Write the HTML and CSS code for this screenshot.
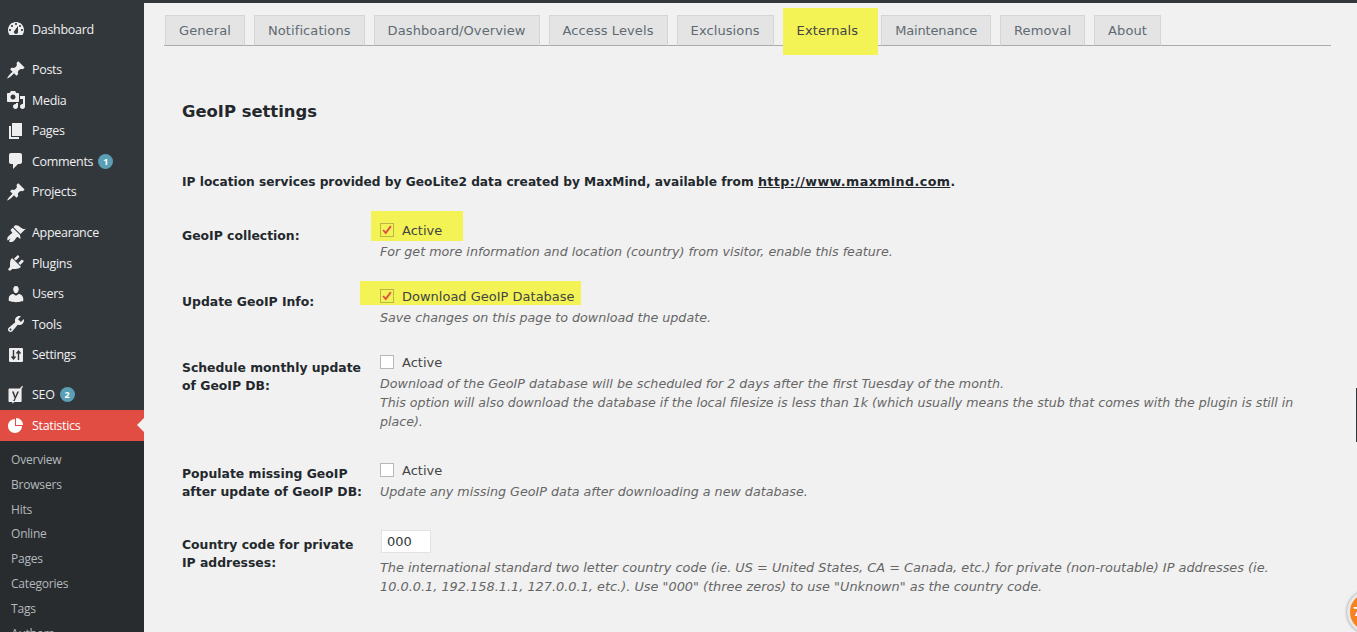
FILE: index.html
```html
<!DOCTYPE html>
<html lang="en">
<head>
<meta charset="utf-8">
<title>Statistics settings</title>
<link rel="stylesheet" href="styles.css">
</head>
<body>
<div class="page">
  <nav class="sidebar">
    <ul class="menu menu-first">
      <li class="item"><svg class="icon" viewBox="0 0 20 20"><path d="M3.76 16h12.48c1.1-1.37 1.76-3.11 1.76-5 0-4.42-3.58-8-8-8s-8 3.58-8 8c0 1.89.66 3.63 1.76 5zM10 4c.55 0 1 .45 1 1s-.45 1-1 1-1-.45-1-1 .45-1 1-1zM6 6c.55 0 1 .45 1 1s-.45 1-1 1-1-.45-1-1 .45-1 1-1zm8 0c.55 0 1 .45 1 1s-.45 1-1 1-1-.45-1-1 .45-1 1-1zm-5.37 5.55L12 7v6c0 1.1-.9 2-2 2s-2-.9-2-2c0-.57.24-1.08.63-1.45zM4 10c.55 0 1 .45 1 1s-.45 1-1 1-1-.45-1-1 .45-1 1-1zm12 0c.55 0 1 .45 1 1s-.45 1-1 1-1-.45-1-1 .45-1 1-1z" fill-rule="evenodd"/></svg><span>Dashboard</span></li>
    </ul>
    <ul class="menu">
      <li class="item"><svg class="icon" viewBox="0 0 20 20"><path d="M10.44 3.02l1.82-1.82 6.36 6.35-1.83 1.82c-1.05-.68-2.48-.57-3.41.36l-.75.75c-.92.93-1.04 2.35-.35 3.41l-1.83 1.82-2.41-2.41-2.8 2.79c-.42.42-3.38 2.71-3.8 2.29s1.86-3.39 2.28-3.81l2.79-2.79L4.1 9.36l1.83-1.82c1.05.69 2.48.57 3.4-.36l.75-.75c.93-.92 1.05-2.35.36-3.41z"/></svg><span>Posts</span></li>
      <li class="item"><svg class="icon" viewBox="0 0 20 20"><path fill-rule="evenodd" d="M13 11V4c0-.55-.45-1-1-1h-1.67L9 1H5L3.67 3H2c-.55 0-1 .45-1 1v7c0 .55.45 1 1 1h10c.55 0 1-.45 1-1zM7 4.5c1.38 0 2.5 1.12 2.5 2.5S8.38 9.5 7 9.5 4.5 8.38 4.5 7 5.62 4.5 7 4.5zM14 6h5v10.5c0 1.38-1.12 2.5-2.5 2.5S14 17.88 14 16.5s1.12-2.5 2.5-2.5c.17 0 .34.02.5.05V9h-3V6zm-4 8.05V13h2v3.5c0 1.38-1.12 2.5-2.5 2.5S7 17.88 7 16.5 8.12 14 9.5 14c.17 0 .34.02.5.05z"/></svg><span>Media</span></li>
      <li class="item"><svg class="icon" viewBox="0 0 20 20"><path d="M6 15V2h10v13H6zm-1 1h8v2H3V5h2v11z"/></svg><span>Pages</span></li>
      <li class="item"><svg class="icon" viewBox="0 0 20 20"><path d="M5 2h9c1.1 0 2 .9 2 2v7c0 1.1-.9 2-2 2h-2l-5 5v-5H5c-1.1 0-2-.9-2-2V4c0-1.1.9-2 2-2z"/></svg><span>Comments</span><b class="count">1</b></li>
      <li class="item"><svg class="icon" viewBox="0 0 20 20"><path d="M10.44 3.02l1.82-1.82 6.36 6.35-1.83 1.82c-1.05-.68-2.48-.57-3.41.36l-.75.75c-.92.93-1.04 2.35-.35 3.41l-1.83 1.82-2.41-2.41-2.8 2.79c-.42.42-3.38 2.71-3.8 2.29s1.86-3.39 2.28-3.81l2.79-2.79L4.1 9.36l1.83-1.82c1.05.69 2.48.57 3.4-.36l.75-.75c.93-.92 1.05-2.35.36-3.41z"/></svg><span>Projects</span></li>
    </ul>
    <ul class="menu menu-tools">
      <li class="item"><svg class="icon" viewBox="0 0 20 20"><path d="M14.48 11.06L7.41 3.99l1.5-1.5c.5-.56 2.3-.47 3.51.32 1.21.8 1.43 1.28 2.91 2.1 1.18.64 2.45 1.26 4.45.85zm-.71.71L6.7 4.7 4.93 6.47c-.39.39-.39 1.02 0 1.41l1.06 1.06c.39.39.39 1.03 0 1.42-.6.6-1.43 1.11-2.21 1.69-.35.26-.7.53-1.01.84C1.43 13.71.96 15.65 1.4 17.2l.28.28 3.02-2.08-1.8 2.84.56.56c1.53.45 3.47-.02 4.8-1.35.31-.31.58-.66.84-1.01.58-.78 1.09-1.61 1.69-2.21.39-.39 1.02-.39 1.41 0l1.06 1.06c.39.39 1.02.39 1.41 0z"/></svg><span>Appearance</span></li>
      <li class="item"><svg class="icon" viewBox="0 0 20 20"><path d="M13.11 4.36L9.87 7.6 8 5.73l3.24-3.24c.35-.34 1.05-.2 1.56.32.52.51.66 1.21.31 1.55zm-8 1.77l.91-1.12 9.01 9.01-1.19.84c-.71.71-2.63 1.16-3.82 1.16H6.14L4.9 17.26c-.59.59-1.54.59-2.12 0-.59-.58-.59-1.53 0-2.12l1.24-1.24v-3.88c0-1.13.4-3.19 1.09-3.89zm7.26 3.97l3.24-3.24c.34-.35 1.04-.21 1.55.31.52.51.66 1.21.31 1.55l-3.24 3.25z"/></svg><span>Plugins</span></li>
      <li class="item"><svg class="icon" viewBox="0 0 20 20"><path d="M10 9.25c-2.27 0-2.73-3.44-2.73-3.44C7 4.02 7.82 2 9.97 2c2.16 0 2.98 2.02 2.71 3.81 0 0-.41 3.44-2.68 3.44zm0 2.57L12.72 10c2.39 0 4.52 2.33 4.52 4.53v2.49s-3.65 1.13-7.24 1.13c-3.65 0-7.24-1.13-7.24-1.13v-2.49c0-2.25 1.94-4.48 4.47-4.48z"/></svg><span>Users</span></li>
      <li class="item"><svg class="icon" viewBox="0 0 20 20"><path fill-rule="evenodd" d="M16.68 9.77c-1.34 1.34-3.3 1.67-4.95.99l-5.41 6.52c-.99.99-2.59.99-3.58 0s-.99-2.59 0-3.57l6.52-5.42c-.68-1.65-.35-3.61.99-4.95 1.28-1.28 3.12-1.62 4.72-1.06l-2.89 2.89 2.82 2.82 2.86-2.87c.53 1.58.18 3.39-1.08 4.65zM3.81 16.21c.4.39 1.04.39 1.43 0 .4-.4.4-1.04 0-1.43-.39-.4-1.03-.4-1.43 0-.39.39-.39 1.03 0 1.43z"/></svg><span>Tools</span></li>
      <li class="item"><svg class="icon" viewBox="0 0 20 20"><rect x="3" y="3" width="14" height="14" rx="1"/><path class="icon-cut" d="M7.500 5v9M5.500 11.500l2 2.500 2-2.500M12.500 15V6M10.500 8.500l2-2.500 2 2.500"/></svg><span>Settings</span></li>
    </ul>
    <ul class="menu">
      <li class="item"><svg class="icon" viewBox="0 0 20 20"><path fill-rule="evenodd" d="M3.5 3.500h10.200l2.300-2.600 1.200.6-1.600 2v12.500c0 .6-.4 1-1 1H8l-1 1.600-1-.5.6-1.100H3.500c-.6 0-1-.4-1-1v-11.500c0-.6.4-1 1-1zM6 6.500l2.600 6.700-1.500 2.800h1.500l4.400-9.500h-1.700l-2 4.700-1.500-4.700z"/></svg><span>SEO</span><b class="count">2</b></li>
      <li class="item current"><svg class="icon" viewBox="0 0 20 20"><path d="M10 10V3c3.870 0 7 3.130 7 7h-7zM9 4v7h7c0 3.870-3.130 7-7 7s-7-3.130-7-7 3.130-7 7-7z"/></svg><span>Statistics</span></li>
    </ul>
    <ul class="submenu">
      <li>Overview</li>
      <li>Browsers</li>
      <li>Hits</li>
      <li>Online</li>
      <li>Pages</li>
      <li>Categories</li>
      <li>Tags</li>
      <li>Authors</li>
    </ul>
  </nav>

  <main class="content">
    <ul class="tabs">
      <li class="tab">General</li>
      <li class="tab">Notifications</li>
      <li class="tab">Dashboard/Overview</li>
      <li class="tab">Access Levels</li>
      <li class="tab">Exclusions</li>
      <li class="tab active">Externals</li>
      <li class="tab tab-tight">Maintenance</li>
      <li class="tab">Removal</li>
      <li class="tab">About</li>
    </ul>

    <h2 class="title">GeoIP settings</h2>
    <p class="intro">IP location services provided by GeoLite2 data created by MaxMind, available from <a href="#">http://www.maxmind.com</a>.</p>

    <div class="rows">
      <div class="row row-a">
        <div class="label">GeoIP collection:</div>
        <div class="field">
          <label class="option mark-a"><span class="box on"><svg viewBox="0 0 14 14"><path d="M2.500 7l3 3.500 6-8" fill="none" stroke="#e14d43" stroke-width="2.200"/></svg></span>Active</label>
          <p class="desc">For get more information and location (country) from visitor, enable this feature.</p>
        </div>
      </div>
      <div class="row row-b">
        <div class="label">Update GeoIP Info:</div>
        <div class="field">
          <label class="option mark-b"><span class="box on"><svg viewBox="0 0 14 14"><path d="M2.500 7l3 3.500 6-8" fill="none" stroke="#e14d43" stroke-width="2.200"/></svg></span>Download GeoIP Database</label>
          <p class="desc">Save changes on this page to download the update.</p>
        </div>
      </div>
      <div class="row row-c">
        <div class="label">Schedule monthly update of GeoIP DB:</div>
        <div class="field">
          <label class="option"><span class="box"></span>Active</label>
          <p class="desc">Download of the GeoIP database will be scheduled for 2 days after the first Tuesday of the month.</p>
          <p class="desc">This option will also download the database if the local filesize is less than 1k (which usually means the stub that comes with the plugin is still in place).</p>
        </div>
      </div>
      <div class="row row-d">
        <div class="label">Populate missing GeoIP after update of GeoIP DB:</div>
        <div class="field">
          <label class="option"><span class="box"></span>Active</label>
          <p class="desc">Update any missing GeoIP data after downloading a new database.</p>
        </div>
      </div>
      <div class="row row-e">
        <div class="label">Country code for private IP addresses:</div>
        <div class="field">
          <input class="code" type="text" value="000">
          <p class="desc">The international standard two letter country code (ie. US = United States, CA = Canada, etc.) for private (non-routable) IP addresses (ie. 10.0.0.1, 192.158.1.1, 127.0.0.1, etc.). Use "000" (three zeros) to use "Unknown" as the country code.</p>
        </div>
      </div>
    </div>

    <div class="scroll-mark"></div>
    <div class="help-badge">7</div>
  </main>
</div>
</body>
</html>
```

FILE: styles.css
```css
* { box-sizing: border-box; }
html, body { margin: 0; padding: 0; height: 100%; overflow: hidden; }
body { background: #f1f1f1; font-family: "DejaVu Sans", Verdana, sans-serif; font-size: 13px; color: #444; }
ul { list-style: none; margin: 0; padding: 0; }
p { margin: 0; }

.page { display: flex; height: 632px; overflow: hidden; }

/* Sidebar */
.sidebar { width: 144px; flex: none; background: #32373c; padding-top: 14px; font-family: "Open Sans", sans-serif; overflow: hidden; }
.menu { margin-bottom: 10.500px; }
.menu-first { margin-bottom: 10px; }
.menu-tools { margin-bottom: 9.500px; }
.item { position: relative; display: flex; align-items: center; height: 30.500px; padding-left: 6px; color: #f0f0f0; font-size: 12.500px; letter-spacing: -0.3px; }
.icon { width: 20px; height: 20px; flex: none; margin-right: 6px; fill: #eee; }
.icon-cut { fill: none; stroke: #32373c; stroke-width: 1.400; }
.count { width: 15px; height: 15px; margin-left: 5px; border-radius: 50%; background: #5a9fb5; color: #fff; font-size: 9px; line-height: 15px; text-align: center; font-weight: 700; letter-spacing: 0; }
.current { background: #e14d43; color: #fff; }
.current .icon { fill: #fff; }
.current::after { content: ""; position: absolute; right: 0; top: 8px; border: 7px solid transparent; border-left-width: 0; border-right-color: #f1f1f1; }
.menu:has(.current) { margin-bottom: 0; }
.submenu { background: #292c2f; padding: 7.600px 0 0 11px; height: 200px; font-size: 12px; color: #b4b9be; letter-spacing: -0.2px; }
.submenu li { height: 24.800px; line-height: 24.800px; }

/* Content */
.content { position: relative; flex: 1; min-width: 0; border-top: 3px solid #32373c; }
.tabs { display: flex; gap: 9px; margin: 12px 26px 0 20px; padding-left: 1px; border-bottom: 1px solid #aaa; }
.tab { height: 31px; margin-bottom: -1px; padding: 0 13px; line-height: 30px; background: #e4e4e4; border: 1px solid #d5d5d5; border-bottom-color: #aaa; color: #5f6a72; white-space: nowrap; letter-spacing: 0.1px; }
.tab-tight { letter-spacing: -0.17px; }
.active { position: relative; z-index: 0; background: #ffff55; border-color: #a8a830 #a8a830 #aaa; color: #444; }
.active::before { content: ""; position: absolute; z-index: -1; left: -1px; top: -8px; width: 95px; height: 47px; background: #f3f355; }

.title { margin: 55px 0 0 38px; font-size: 16.400px; line-height: 22px; font-weight: 700; color: #23282d; }
.intro { margin: 49px 0 0 38px; font-size: 12.200px; font-weight: 700; line-height: 20px; color: #23282d; }
.intro a { color: inherit; font-size: 12.700px; letter-spacing: 0.400px; }

.rows { margin: 28px 0 0 38px; width: 1120px; }
.row { display: grid; grid-template-columns: 198px 1fr; }
.row-b { margin-top: 25px; }
.row-c { margin-top: 25px; }
.row-d { margin-top: 29px; }
.row-e { margin-top: 29px; }
.label { padding-top: 7px; padding-right: 13px; font-size: 12.400px; font-weight: 700; line-height: 18px; color: #23282d; }
.row-d .label { padding-top: 5px; }
.row-e .label { padding-top: 6px; }
.option { position: relative; z-index: 0; display: flex; align-items: center; height: 20px; color: #444; }
.box { display: block; width: 14px; height: 14px; margin-right: 8px; background: #fff; border: 1px solid #b4b9be; }
.box.on { background: #f3f355; border-color: #b8b84a; }
.box svg { display: block; width: 12px; height: 12px; }
.mark-a::before, .mark-b::before { content: ""; position: absolute; z-index: -1; background: #f3f355; }
.mark-a::before { left: -9px; top: -9px; width: 92px; height: 30px; }
.mark-b::before { left: -20px; top: -5px; width: 221px; height: 24px; }
.desc { line-height: 19px; padding-top: 2px; font-size: 12.700px; font-style: italic; color: #666; }
.desc + .desc { padding-top: 0; font-size: 12.600px; }
.row-e .desc { font-size: 12.880px; }
.field { width: 920px; min-width: 0; }
.code { display: block; width: 50px; height: 23px; margin: 0 0 3px 1px; padding: 0 5px; background: #fff; border: 1px solid #e2e2e2; font: 13px "DejaVu Sans", sans-serif; color: #32373c; }

/* Overlays on the window edge */
.scroll-mark { position: absolute; right: 0; top: 385px; width: 1px; height: 54px; background: #32373c; }
.help-badge { position: absolute; left: 1203px; top: 587px; width: 44px; height: 44px; border-radius: 50%; background: #f5841f; border: 3px solid #e8e8e8; box-shadow: 0 0 3px #888; color: #fff; font-weight: 700; line-height: 38px; padding-left: 3px; }
```
